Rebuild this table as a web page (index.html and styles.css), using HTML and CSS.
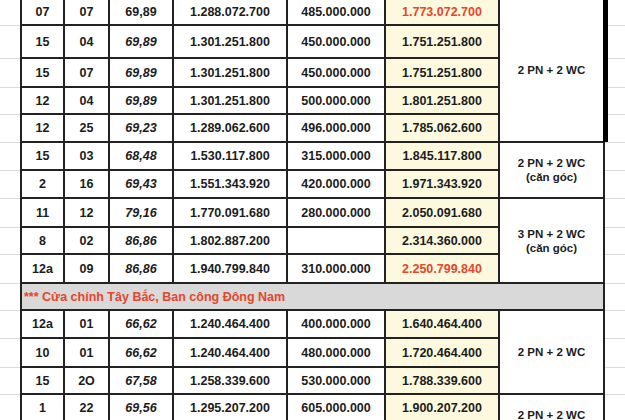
FILE: index.html
```html
<!DOCTYPE html>
<html lang="vi">
<head>
<meta charset="utf-8">
<title>Bảng giá</title>
<link rel="stylesheet" href="styles.css">
</head>
<body>
<table class="sheet">
  <colgroup>
    <col class="c-m"><col class="c1"><col class="c2"><col class="c3"><col class="c4"><col class="c5"><col class="c6"><col class="c7"><col class="c-m2">
  </colgroup>
  <tbody>
    <tr class="h27">
      <td class="m"></td><td>07</td><td>07</td><td>69,89</td><td>1.288.072.700</td><td>485.000.000</td><td class="tot red">1.773.072.700</td>
      <td class="desc sel" rowspan="5">2 PN + 2 WC</td><td class="m"></td>
    </tr>
    <tr class="h33">
      <td class="m"></td><td>15</td><td>04</td><td class="it">69,89</td><td>1.301.251.800</td><td>450.000.000</td><td class="tot">1.751.251.800</td><td class="m"></td>
    </tr>
    <tr class="h29">
      <td class="m"></td><td>15</td><td>07</td><td class="it">69,89</td><td>1.301.251.800</td><td>450.000.000</td><td class="tot">1.751.251.800</td><td class="m"></td>
    </tr>
    <tr class="h27">
      <td class="m"></td><td>12</td><td>04</td><td class="it">69,89</td><td>1.301.251.800</td><td>500.000.000</td><td class="tot">1.801.251.800</td><td class="m"></td>
    </tr>
    <tr class="h28">
      <td class="m"></td><td>12</td><td>25</td><td class="it">69,23</td><td>1.289.062.600</td><td>496.000.000</td><td class="tot">1.785.062.600</td><td class="m"></td>
    </tr>
    <tr class="h28">
      <td class="m"></td><td>15</td><td>03</td><td class="it">68,48</td><td>1.530.117.800</td><td>315.000.000</td><td class="tot">1.845.117.800</td>
      <td class="desc" rowspan="2">2 PN + 2 WC<br>(căn góc)</td><td class="m"></td>
    </tr>
    <tr class="h28">
      <td class="m"></td><td>2</td><td>16</td><td class="it">69,43</td><td>1.551.343.920</td><td>420.000.000</td><td class="tot">1.971.343.920</td><td class="m"></td>
    </tr>
    <tr class="h29">
      <td class="m"></td><td>11</td><td>12</td><td class="it">79,16</td><td>1.770.091.680</td><td>280.000.000</td><td class="tot">2.050.091.680</td>
      <td class="desc" rowspan="3">3 PN + 2 WC<br>(căn góc)</td><td class="m"></td>
    </tr>
    <tr class="h27">
      <td class="m"></td><td>8</td><td>02</td><td class="it">86,86</td><td>1.802.887.200</td><td></td><td class="tot">2.314.360.000</td><td class="m"></td>
    </tr>
    <tr class="h29">
      <td class="m"></td><td>12a</td><td>09</td><td class="it">86,86</td><td>1.940.799.840</td><td>310.000.000</td><td class="tot red">2.250.799.840</td><td class="m"></td>
    </tr>
    <tr class="h27">
      <td class="m"></td><td class="group" colspan="7">*** Cửa chính Tây Bắc, Ban công Đông Nam</td><td class="m"></td>
    </tr>
    <tr class="h28">
      <td class="m"></td><td>12a</td><td>01</td><td class="it">66,62</td><td>1.240.464.400</td><td>400.000.000</td><td class="tot">1.640.464.400</td>
      <td class="desc" rowspan="3">2 PN + 2 WC</td><td class="m"></td>
    </tr>
    <tr class="h29">
      <td class="m"></td><td>10</td><td>01</td><td class="it">66,62</td><td>1.240.464.400</td><td>480.000.000</td><td class="tot">1.720.464.400</td><td class="m"></td>
    </tr>
    <tr class="h27">
      <td class="m"></td><td>15</td><td>2O</td><td class="it">67,58</td><td>1.258.339.600</td><td>530.000.000</td><td class="tot">1.788.339.600</td><td class="m"></td>
    </tr>
    <tr class="h28">
      <td class="m"></td><td>1</td><td>22</td><td class="it">69,56</td><td>1.295.207.200</td><td>605.000.000</td><td class="tot">1.900.207.200</td>
      <td class="desc" rowspan="2">2 PN + 2 WC<br>(căn góc)</td><td class="m"></td>
    </tr>
    <tr class="h28">
      <td class="m"></td><td></td><td></td><td class="it"></td><td></td><td></td><td class="tot"></td><td class="m"></td>
    </tr>
  </tbody>
</table>
</body>
</html>
```

FILE: styles.css
```css
html, body {
  margin: 0;
  padding: 0;
  background: #ffffff;
  overflow: hidden;
}

body {
  width: 625px;
  height: 420px;
}

.sheet {
  margin-top: -3px;
  width: 625px;
  table-layout: fixed;
  border-collapse: collapse;
  font-family: "Liberation Sans", Arial, sans-serif;
  font-weight: bold;
  font-size: 12.5px;
  color: #1c1c1c;
}

.c-m { width: 21px; }
.c1 { width: 43px; }
.c2 { width: 45px; }
.c3 { width: 64px; }
.c4 { width: 114px; }
.c5 { width: 98px; }
.c6 { width: 114px; }
.c7 { width: 105px; }
.c-m2 { width: 21px; }

.h27 { height: 27px; }
.h28 { height: 28px; }
.h29 { height: 29px; }
.h33 { height: 33px; }

.sheet td {
  padding: 0;
  border: 2px solid #222222;
  text-align: center;
  vertical-align: middle;
  white-space: nowrap;
  line-height: 14px;
}

.sheet td.m {
  border: none;
  border-bottom: 1px solid #dadada;
  background: #ffffff;
}

.it {
  font-style: italic;
}

.tot {
  background: #fcf9de;
}

.red {
  color: #e5462c;
}

.desc {
  font-size: 11.5px;
  line-height: 14px;
  background: #ffffff;
}

.sel {
  position: relative;
}

.sel::after {
  content: "";
  position: absolute;
  top: -2px;
  bottom: -1px;
  right: -5px;
  width: 5px;
  background: #000000;
}

.group {
  background: #d9d9d9;
  color: #e5462c;
  text-align: left !important;
  padding-left: 2px !important;
}
```
